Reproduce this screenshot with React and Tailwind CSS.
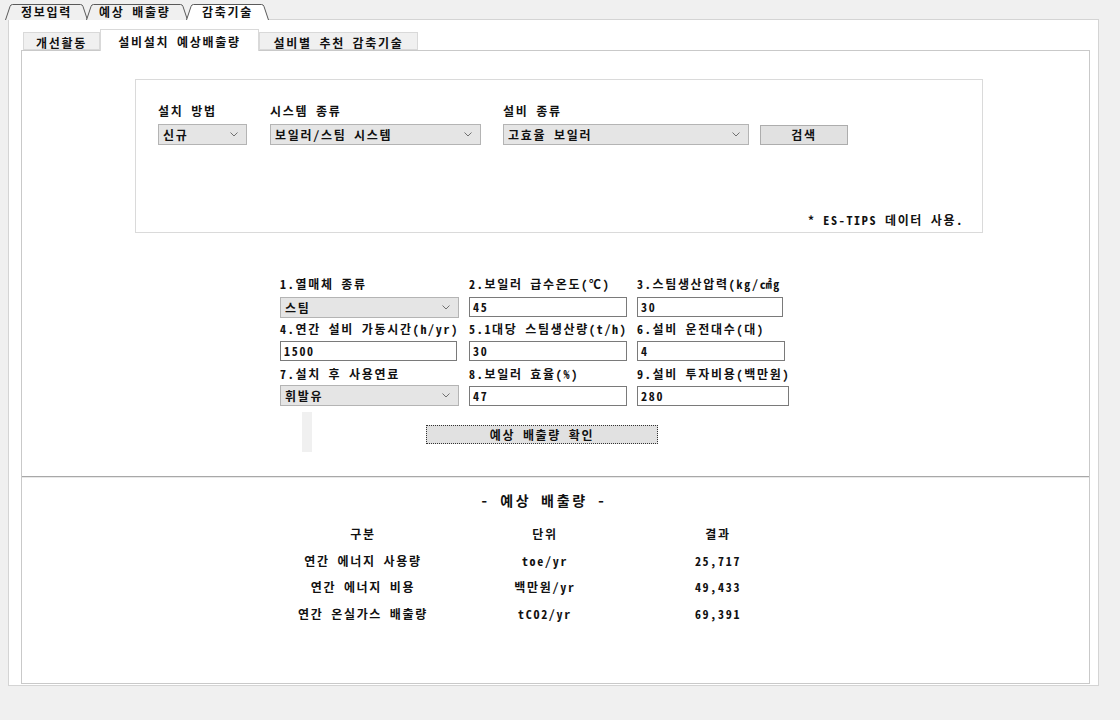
import React from 'react'

const FONT = "font-['Noto_Sans_Mono_CJK_KR','Noto_Sans_CJK_KR',monospace]"

function OuterTab({ label, width, active, textOffset }) {
  const w = width
  const path = `M0.5 17 L5 3.5 Q5.6 1.5 7.5 1.5 L${w - 8.5} 1.5 Q${w - 6.6} 1.5 ${w - 6} 3.5 L${w - 1.5} 17`
  return (
    <div className={`relative h-[17px] ${active ? 'z-20' : 'z-10'}`} style={{ width: w }}>
      <svg className="absolute inset-0" width={w} height="17" viewBox={`0 0 ${w} 17`}>
        <path d={`${path} Z`} fill={active ? '#ffffff' : '#f0f0f0'} stroke="none" />
        <path d={path} fill="none" stroke="#5a5a5a" strokeWidth="1" />
      </svg>
      <span
        className="relative block text-[12px] leading-[17px] font-bold text-[#111] tracking-[1.7px] whitespace-nowrap"
        style={{ paddingLeft: textOffset }}
      >
        {label}
      </span>
    </div>
  )
}

function InnerTab({ label, active, width }) {
  return (
    <div
      className={`flex justify-center border border-[#d9d9d9] text-[12px] font-bold text-[#111] tracking-[1.7px] whitespace-nowrap ${
        active
          ? 'h-[22px] border-b-0 bg-white pt-[3px] relative z-10 -mb-[1px]'
          : 'h-[18px] mt-[4px] bg-[#f0f0f0] pt-[1px]'
      }`}
      style={{ width }}
    >
      {label}
    </div>
  )
}

function Select({ value, className }) {
  return (
    <div
      className={`flex items-center justify-between border border-[#b4b4b4] bg-[#e5e5e5] pl-[4px] pr-[8px] text-[12px] font-bold text-[#111] ${className}`}
    >
      <span className="tracking-[1.7px]">{value}</span>
      <svg width="8" height="5" viewBox="0 0 8 5">
        <path d="M0.5 0.5 L4 4 L7.5 0.5" fill="none" stroke="#707070" strokeWidth="1" />
      </svg>
    </div>
  )
}

function Input({ value, className }) {
  return (
    <div
      className={`flex items-center border border-[#7a7a7a] bg-white pl-[3px] text-[12px] font-bold text-[#111] tracking-[1.7px] ${className}`}
    >
      {value}
    </div>
  )
}

function Label({ children }) {
  return (
    <div className="h-[14px] leading-[14px] text-[12px] font-bold text-[#111] whitespace-nowrap tracking-[1.7px]">
      {children}
    </div>
  )
}

const results = [
  { name: '연간 에너지 사용량', unit: 'toe/yr', value: '25,717', h: 'h-[27px]' },
  { name: '연간 에너지 비용', unit: '백만원/yr', value: '49,433', h: 'h-[26px]' },
  { name: '연간 온실가스 배출량', unit: 'tCO2/yr', value: '69,391', h: 'h-[27px]' },
]

export default function App() {
  return (
    <div className={`w-[1120px] h-[720px] bg-[#f0f0f0] ${FONT} overflow-hidden`}>
      {/* outer tabs */}
      <div className="flex pt-[3px] pl-[5px] h-[20px] relative z-10">
        <OuterTab label="정보입력" width={84} textOffset={16} />
        <div className="-ml-[3px]">
          <OuterTab label="예상 배출량" width={103} textOffset={13} />
        </div>
        <div className="-ml-[3px]">
          <OuterTab label="감축기술" width={84} active textOffset={16} />
        </div>
      </div>

      {/* outer panel */}
      <div className="ml-[8px] -mt-[1px] w-[1091px] h-[667px] border border-[#d4d4d4] bg-white pl-[12px]">
        {/* inner tabs */}
        <div className="flex mt-[8px] pl-[2px] items-end">
          <InnerTab label="개선활동" width={77} />
          <InnerTab label="설비설치 예상배출량" width={159} active />
          <InnerTab label="설비별 추천 감축기술" width={159} />
        </div>

        {/* inner panel */}
        <div className="w-[1069px] h-[634px] border border-[#c9c9c9] bg-white">
          {/* search box */}
          <div className="ml-[113px] mt-[28px] w-[848px] h-[154px] border border-[#dadada] flex flex-col pl-[22px] pt-[24px]">
            <div className="flex">
              <div className="w-[89px]">
                <Label>설치 방법</Label>
                <Select value="신규" className="mt-[6px] h-[21px] w-[89px]" />
              </div>
              <div className="ml-[23px] w-[211px]">
                <Label>시스템 종류</Label>
                <Select value="보일러/스팀 시스템" className="mt-[6px] h-[21px] w-[211px]" />
              </div>
              <div className="ml-[22px] w-[246px]">
                <Label>설비 종류</Label>
                <Select value="고효율 보일러" className="mt-[6px] h-[21px] w-[246px]" />
              </div>
              <div className="ml-[11px] mt-[21px] w-[88px] h-[20px] border border-[#adadad] bg-[#e1e1e1] flex items-center justify-center text-[12px] font-bold text-[#111] tracking-[1.7px]">
                검색
              </div>
            </div>
            <div className="mt-auto mb-[5px] pr-[18px] text-right text-[12px] leading-[14px] font-bold text-[#111] tracking-[1.7px]">
              * ES-TIPS 데이터 사용.
            </div>
          </div>

          {/* input form */}
          <div className="ml-[258px] mt-[44px]">
            <div className="flex h-[45px]">
              <div className="w-[189px]">
                <Label>1.열매체 종류</Label>
                <Select value="스팀" className="mt-[6px] h-[21px] w-[179px]" />
              </div>
              <div className="w-[168px]">
                <Label>2.보일러 급수온도(℃)</Label>
                <Input value="45" className="mt-[6px] h-[20px] w-[158px]" />
              </div>
              <div>
                <Label>3.스팀생산압력(kg/㎠g</Label>
                <Input value="30" className="mt-[6px] h-[20px] w-[146px]" />
              </div>
            </div>
            <div className="flex h-[45px]">
              <div className="w-[189px]">
                <Label>4.연간 설비 가동시간(h/yr)</Label>
                <Input value="1500" className="mt-[5px] h-[20px] w-[177px]" />
              </div>
              <div className="w-[168px]">
                <Label>5.1대당 스팀생산량(t/h)</Label>
                <Input value="30" className="mt-[5px] h-[20px] w-[158px]" />
              </div>
              <div>
                <Label>6.설비 운전대수(대)</Label>
                <Input value="4" className="mt-[5px] h-[20px] w-[148px]" />
              </div>
            </div>
            <div className="flex">
              <div className="w-[189px]">
                <Label>7.설치 후 사용연료</Label>
                <Select value="휘발유" className="mt-[4px] h-[21px] w-[179px]" />
              </div>
              <div className="w-[168px]">
                <Label>8.보일러 효율(%)</Label>
                <Input value="47" className="mt-[5px] h-[20px] w-[158px]" />
              </div>
              <div>
                <Label>9.설비 투자비용(백만원)</Label>
                <Input value="280" className="mt-[5px] h-[20px] w-[152px]" />
              </div>
            </div>

            <div className="flex mt-[6px]">
              <div className="ml-[22px] w-[10px] h-[40px] bg-[#f0f0f0]" />
              <div className="ml-[114px] mt-[13px] w-[232px] h-[19px] bg-[#e1e1e1] border border-dotted border-[#333] flex items-center justify-center text-[12px] font-bold text-[#111] tracking-[1.7px]">
                예상 배출량 확인
              </div>
            </div>
          </div>

          {/* separator */}
          <div className="mt-[24px] h-[2px] border-t border-[#a8a8a8] border-b border-b-[#e8e8e8]" />

          {/* result */}
          <div className="mt-[12px] h-[20px] leading-[20px] text-center text-[14px] font-bold text-[#111] tracking-[2.7px] pr-[23px] whitespace-pre">
            - 예상 배출량 -
          </div>

          <div className="ml-[241px] mt-[11px] text-[12px] font-bold text-[#111] tracking-[1.7px]">
            <div className="flex h-[26px] items-center">
              <div className="w-[200px] text-center">구분</div>
              <div className="w-[164px] text-center">단위</div>
              <div className="w-[182px] text-center">결과</div>
            </div>
            {results.map((r) => (
              <div key={r.name} className={`flex items-center ${r.h}`}>
                <div className="w-[200px] text-center">{r.name}</div>
                <div className="w-[164px] text-center">{r.unit}</div>
                <div className="w-[182px] text-center">{r.value}</div>
              </div>
            ))}
          </div>
        </div>
      </div>
    </div>
  )
}
